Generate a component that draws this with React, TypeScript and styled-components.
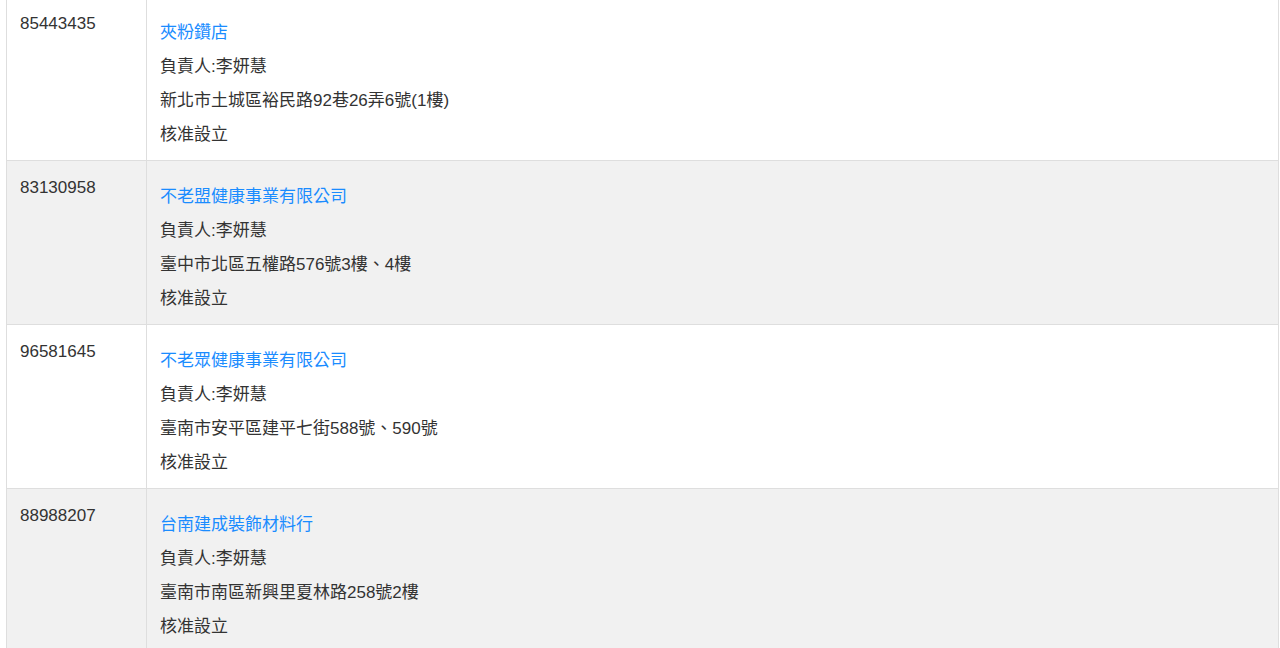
import React from "react";
import styled, { createGlobalStyle } from "styled-components";

type Company = {
  id: string;
  name: string;
  owner: string;
  address: string;
  status: string;
};

const companies: Company[] = [
  {
    id: "85443435",
    name: "夾粉鑽店",
    owner: "負責人:李妍慧",
    address: "新北市土城區裕民路92巷26弄6號(1樓)",
    status: "核准設立",
  },
  {
    id: "83130958",
    name: "不老盟健康事業有限公司",
    owner: "負責人:李妍慧",
    address: "臺中市北區五權路576號3樓、4樓",
    status: "核准設立",
  },
  {
    id: "96581645",
    name: "不老眾健康事業有限公司",
    owner: "負責人:李妍慧",
    address: "臺南市安平區建平七街588號、590號",
    status: "核准設立",
  },
  {
    id: "88988207",
    name: "台南建成裝飾材料行",
    owner: "負責人:李妍慧",
    address: "臺南市南區新興里夏林路258號2樓",
    status: "核准設立",
  },
];

const GlobalStyle = createGlobalStyle`
  html, body {
    margin: 0;
    padding: 0;
    background: #fff;
    overflow: hidden;
  }
  body {
    font-family: "Liberation Sans", Arial, "Noto Sans CJK TC", sans-serif;
    font-size: 17px;
    color: #333;
  }
`;

const Page = styled.div`
  padding: 0 1px 0 6px;
`;

const Table = styled.div`
  margin-top: -4px;
  border-left: 1px solid #dedede;
  border-right: 1px solid #dedede;
`;

const Row = styled.div<{ $striped: boolean }>`
  display: grid;
  grid-template-columns: 140px 1fr;
  border-top: 1px solid #dedede;
  background: ${(p) => (p.$striped ? "#f1f1f1" : "#fff")};
`;

const IdCell = styled.div`
  padding: 15px 13px 13px;
  line-height: 24px;
  border-right: 1px solid #dedede;
`;

const InfoCell = styled.div`
  display: flex;
  flex-direction: column;
  gap: 10px;
  padding: 24px 13px 13px;
  line-height: 24px;
`;

const NameLink = styled.a`
  color: #1a8cff;
  text-decoration: none;
`;

const Line = styled.div``;

export default function App() {
  return (
    <Page>
      <GlobalStyle />
      <Table>
        {companies.map((c, i) => (
          <Row key={c.id} $striped={i % 2 === 1}>
            <IdCell>{c.id}</IdCell>
            <InfoCell>
              <Line>
                <NameLink href="#">{c.name}</NameLink>
              </Line>
              <Line>{c.owner}</Line>
              <Line>{c.address}</Line>
              <Line>{c.status}</Line>
            </InfoCell>
          </Row>
        ))}
      </Table>
    </Page>
  );
}
